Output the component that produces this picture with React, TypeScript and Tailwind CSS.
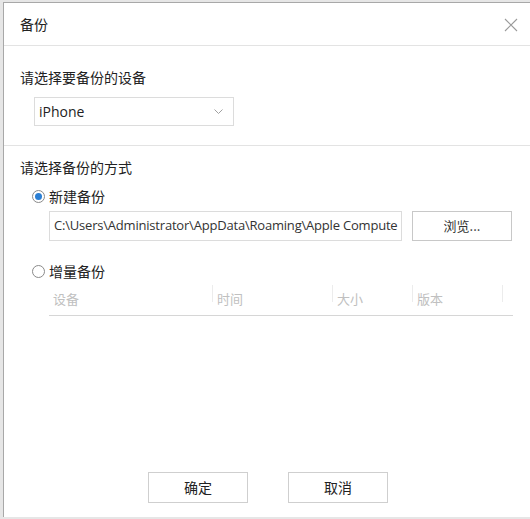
import React from 'react';

const cjk = { fontFamily: '"Microsoft YaHei", "Noto Sans CJK SC", "Noto Sans", sans-serif' };

const Radio = ({ checked }: { checked?: boolean }) => (
  <span className="w-[13px] h-[13px] rounded-full border border-[#8a8a8a] bg-white flex items-center justify-center shrink-0">
    {checked && <span className="w-[7px] h-[7px] rounded-full bg-[#2b7fd4]" />}
  </span>
);

const App = () => {
  return (
    <div className="w-[530px] h-[519px] bg-[#e6e6e6] pt-[2px] pl-[3px] pb-[2px] overflow-hidden" style={cjk}>
      <div className="h-full bg-white border-l border-t border-[#a8a8a8] flex flex-col text-[#222]">
        {/* header */}
        <div className="h-[43px] flex items-center justify-between pl-[16px] pr-[12px] border-b border-[#e3e3e3] shrink-0">
          <span className="text-[14px]">备份</span>
          <svg width="14" height="14" viewBox="0 0 14 14" className="mt-[2px]">
            <path d="M1 1L13 13M13 1L1 13" stroke="#9a9a9a" strokeWidth="1.1" />
          </svg>
        </div>

        {/* device */}
        <div className="h-[100px] border-b border-[#e3e3e3] pl-[16px] pt-[21px] shrink-0">
          <div className="text-[14px] leading-[20px]">请选择要备份的设备</div>
          <div className="mt-[10px] ml-[14px] w-[200px] h-[29px] border border-[#dcdcdc] flex items-center justify-between pl-[4px] pr-[10px]">
            <span className="text-[14px]" style={{ fontFamily: '"Open Sans", "Noto Sans", sans-serif' }}>iPhone</span>
            <svg width="9" height="6" viewBox="0 0 9 6">
              <path d="M0.5 0.5L4.5 4.5L8.5 0.5" stroke="#a0a0a0" fill="none" strokeWidth="1" />
            </svg>
          </div>
        </div>

        {/* method */}
        <div className="flex-1 pl-[16px] pt-[11px] pr-[17px]">
          <div className="text-[14px] leading-[20px]">请选择备份的方式</div>
          <div className="mt-[9px] ml-[12px] flex items-center gap-[4px] h-[20px]">
            <Radio checked />
            <span className="text-[14px]">新建备份</span>
          </div>
          <div className="mt-[5px] ml-[29px] flex gap-[10px]">
            <div
              className="w-[353px] h-[30px] border border-[#dcdcdc] flex items-center pl-[4px] overflow-hidden whitespace-nowrap text-[13px] tracking-[-0.2px] text-[#333]"
              style={{ fontFamily: '"Open Sans", "Noto Sans", sans-serif' }}
            >
              C:\Users\Administrator\AppData\Roaming\Apple Compute
            </div>
            <div className="w-[100px] h-[30px] border border-[#c8c8c8] flex items-center justify-center text-[13px] text-[#333]">
              浏览...
            </div>
          </div>
          <div className="mt-[20px] ml-[12px] flex items-center gap-[4px] h-[20px]">
            <Radio />
            <span className="text-[14px]">增量备份</span>
          </div>
          <div className="ml-[29px] mt-[4px] h-[31px] border-b border-[#d6d6d6] flex text-[13px] text-[#c0c0c0]">
            <div className="w-[164px] flex items-end pb-[7px] pl-[4px] relative">
              设备
              <span className="absolute right-0 top-[0px] h-[17px] border-r border-[#ececec]" />
            </div>
            <div className="w-[120px] flex items-end pb-[7px] pl-[4px] relative">
              时间
              <span className="absolute right-0 top-[0px] h-[17px] border-r border-[#ececec]" />
            </div>
            <div className="w-[80px] flex items-end pb-[7px] pl-[4px] relative">
              大小
              <span className="absolute right-0 top-[0px] h-[17px] border-r border-[#ececec]" />
            </div>
            <div className="w-[90px] flex items-end pb-[7px] pl-[4px] relative">
              版本
              <span className="absolute right-0 top-[0px] h-[17px] border-r border-[#ececec]" />
            </div>
          </div>
        </div>

        {/* footer */}
        <div className="h-[45px] flex justify-center gap-[40px] pl-[2px] pb-[14px] shrink-0">
          <div className="w-[100px] h-[31px] border border-[#cfcfcf] flex items-center justify-center text-[14px]">确定</div>
          <div className="w-[100px] h-[31px] border border-[#cfcfcf] flex items-center justify-center text-[14px]">取消</div>
        </div>
      </div>
    </div>
  );
};

export default App;
